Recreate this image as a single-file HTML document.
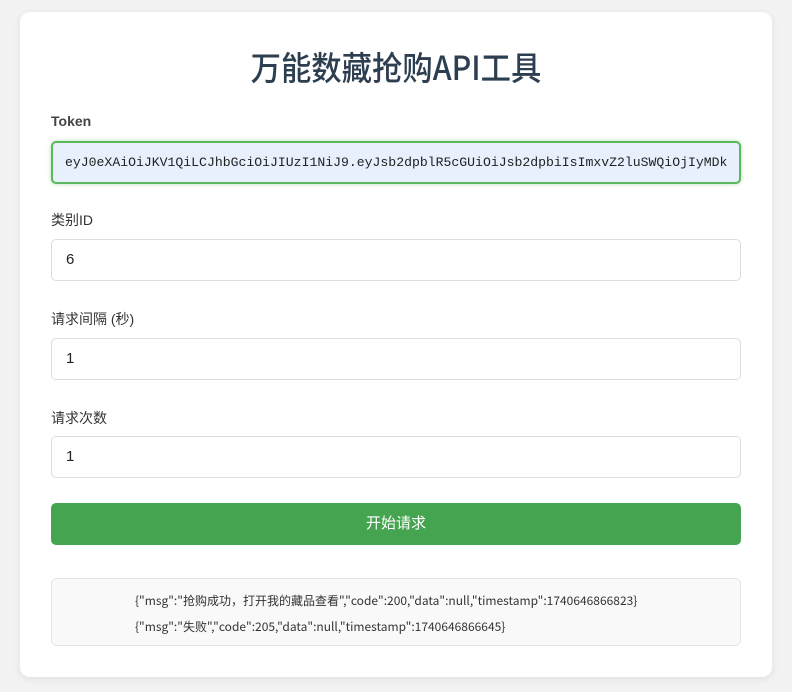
<!DOCTYPE html>
<html><head><meta charset="utf-8"><style>
body{margin:0;background:#f2f2f2;font-family:"Liberation Sans","Noto Sans CJK SC",sans-serif;width:792px;height:692px;overflow:hidden;position:relative}
.card{position:absolute;left:20px;top:12px;width:752px;height:665px;background:#fff;border-radius:10px;box-shadow:0 2px 8px rgba(0,0,0,.08)}
h1{position:absolute;left:0;width:792px;top:44px;margin:0;text-align:center;font-size:33px;font-weight:500;color:#2c3e50;font-family:"Noto Sans CJK SC",sans-serif;line-height:44px;transform:scaleX(.92)}
.lbl{position:absolute;left:51px;font-size:14px;color:#333}
.in{position:absolute;left:51px;width:688px;height:40px;border:1px solid #ddd;border-radius:5px;box-sizing:content-box;font-size:15px;color:#222;line-height:40px;text-indent:14px}
.tok{background:#e8f0fe;border:2px solid #5cb85c;width:686px;height:39px;font-family:"Liberation Mono",monospace;font-size:13.15px;text-indent:12px;white-space:nowrap;overflow:hidden;box-shadow:0 0 4px rgba(76,175,80,.4)}
.btn{position:absolute;left:51px;top:503px;width:690px;height:42px;background:#45a44f;border-radius:5px;color:#fff;text-align:center;line-height:42px;font-size:15px}
.log{position:absolute;left:51px;top:578px;width:688px;height:66px;background:#f9f9f9;border:1px solid #e6e6e6;border-radius:6px;font-size:12px;color:#333;font-family:"Noto Sans CJK SC",sans-serif}
.log div{position:absolute;left:83px;white-space:nowrap;transform:scaleX(1);transform-origin:left}
</style></head><body>
<div class="card"></div>
<h1>万能数藏抢购API工具</h1>
<div class="lbl" style="top:113px;font-weight:bold;color:#444">Token</div>
<div class="in tok" style="top:141px">eyJ0eXAiOiJKV1QiLCJhbGciOiJIUzI1NiJ9.eyJsb2dpblR5cGUiOiJsb2dpbiIsImxvZ2luSWQiOjIyMDk</div>
<div class="lbl" style="top:210px">类别ID</div>
<div class="in" style="top:239px">6</div>
<div class="lbl" style="top:309px">请求间隔 (秒)</div>
<div class="in" style="top:338px">1</div>
<div class="lbl" style="top:408px">请求次数</div>
<div class="in" style="top:436px">1</div>
<div class="btn">开始请求</div>
<div class="log"><div style="top:13px">{"msg":"抢购成功，打开我的藏品查看","code":200,"data":null,"timestamp":1740646866823}</div><div style="top:39px">{"msg":"失败","code":205,"data":null,"timestamp":1740646866645}</div></div>
</body></html>
